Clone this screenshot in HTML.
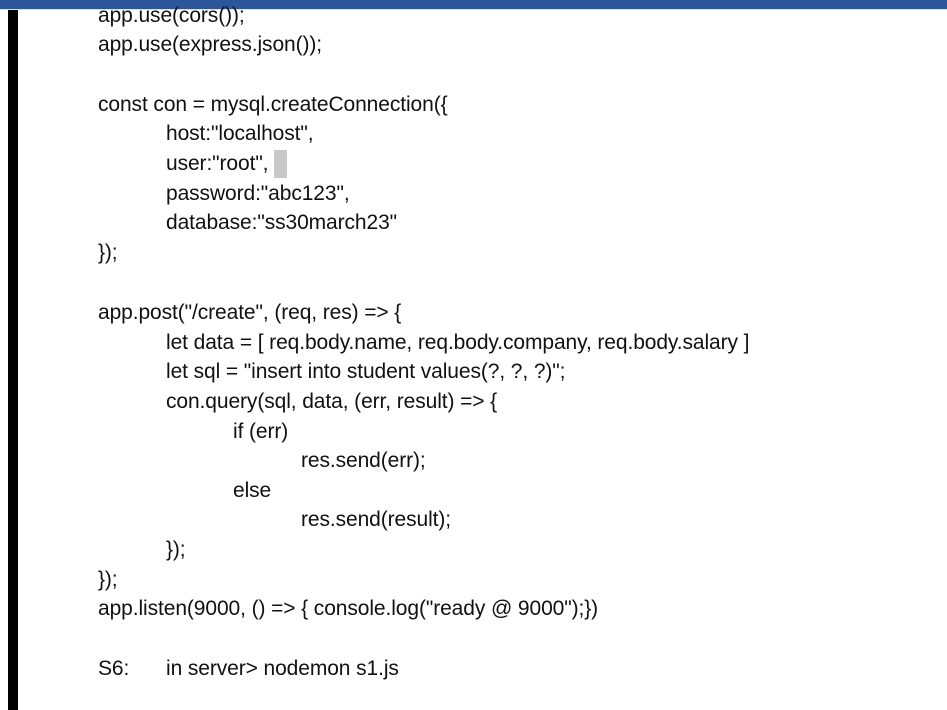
<!DOCTYPE html>
<html><head><meta charset="utf-8"><style>
html,body{margin:0;padding:0;width:947px;height:710px;overflow:hidden;background:#fff;}
.top{position:absolute;left:0;top:0;width:947px;height:9px;background:#2b579a;border-bottom:1px solid #cfe0f5;}
.bar{position:absolute;left:8px;top:10px;width:10px;height:700px;background:#000;}
.l{position:absolute;font-family:"Liberation Sans",Arial,sans-serif;font-size:21px;color:#111;white-space:pre;line-height:22px;letter-spacing:-0.1px;}
.sel{position:absolute;left:274px;top:150px;width:13px;height:28px;background:#c8c8c8;}
</style></head><body>
<div class="top"></div>
<div class="bar"></div>
<div class="sel"></div>
<div class="l" style="left:98px;top:5px">app.use(cors());</div>
<div class="l" style="left:98px;top:34px">app.use(express.json());</div>
<div class="l" style="left:98px;top:94px">const con = mysql.createConnection({</div>
<div class="l" style="left:166px;top:123px">host:"localhost",</div>
<div class="l" style="left:166px;top:153px">user:"root",</div>
<div class="l" style="left:166px;top:183px">password:"abc123",</div>
<div class="l" style="left:166px;top:212px">database:"ss30march23"</div>
<div class="l" style="left:98px;top:242px">});</div>
<div class="l" style="left:98px;top:302px">app.post("/create", (req, res) =&gt; {</div>
<div class="l" style="left:166px;top:332px">let data = [ req.body.name, req.body.company, req.body.salary ]</div>
<div class="l" style="left:166px;top:361px">let sql = "insert into student values(?, ?, ?)";</div>
<div class="l" style="left:166px;top:391px">con.query(sql, data, (err, result) =&gt; {</div>
<div class="l" style="left:233px;top:421px">if (err)</div>
<div class="l" style="left:301px;top:450px">res.send(err);</div>
<div class="l" style="left:233px;top:480px">else</div>
<div class="l" style="left:301px;top:509px">res.send(result);</div>
<div class="l" style="left:166px;top:539px">});</div>
<div class="l" style="left:98px;top:569px">});</div>
<div class="l" style="left:98px;top:598px">app.listen(9000, () =&gt; { console.log("ready @ 9000");})</div>
<div class="l" style="left:98px;top:658px">S6:</div>
<div class="l" style="left:166px;top:658px">in server&gt; nodemon s1.js</div>
</body></html>
